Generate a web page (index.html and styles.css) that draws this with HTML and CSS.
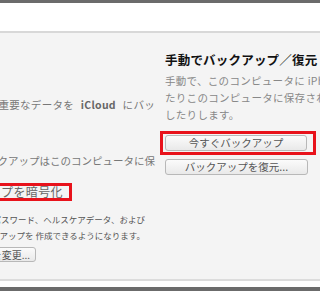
FILE: index.html
```html
<!DOCTYPE html>
<html lang="ja">
<head>
    <meta charset="UTF-8">
    <meta name="viewport" content="width=device-width, initial-scale=1.0">
    <title>バックアップ</title>
    <link rel="stylesheet" href="styles.css">
</head>
<body>

<div class="topbar"></div>
<div class="header"></div>

<div class="panel">
    <div class="col-left">
        <div class="row row-a"><span>iPhone 内の最も重要なデータを <b>iCloud</b> にバッ</span></div>
        <div class="row row-b"><span>iPhone の完全なバックアップはこのコンピュータに保</span></div>
        <div class="row row-c"><span class="mark-left">iPhone のバックアップを暗号化</span></div>
        <div class="row row-d"><span>これにより、アカウントパスワード、ヘルスケアデータ、および</span></div>
        <div class="row row-e"><span>HomeKit データのバックアップを 作成できるようになります。</span></div>
        <div class="row row-f"><span class="btn btn-left">パスワードを変更...</span></div>
    </div>

    <div class="col-right">
        <h3>手動でバックアップ／復元</h3>
        <p class="desc">手動で、このコンピュータに iPhone をバックアップし</p>
        <p class="desc">たりこのコンピュータに保存されたバックアップを復元</p>
        <p class="desc">したりします。</p>

        <div class="mark">
            <button type="button" class="btn">今すぐバックアップ</button>
        </div>
        <button type="button" class="btn btn-restore">バックアップを復元...</button>
    </div>
</div>

<div class="footer"></div>
<div class="bottombar"></div>

</body>
</html>
```

FILE: styles.css
```css
body {
    font-family: "Noto Sans CJK JP", "Noto Sans", sans-serif;
    margin: 0;
    width: 320px;
    height: 291px;
    overflow: hidden;
    background-color: #fff;
}

.topbar {
    height: 3px;
    background-color: #6b6b6b;
}

.header {
    height: 28px;
    background-color: #fff;
    border-bottom: 2px solid #d8d8d8;
}

.panel {
    height: 246px;
    background-color: #f4f4f4;
    display: flex;
}

.col-left {
    width: 160px;
    flex: none;
}

.row {
    display: flex;
    justify-content: flex-end;
    white-space: nowrap;
    color: #777;
}

.row-a,
.row-b {
    width: 155px;
    height: 14px;
    font-size: 10.5px;
    line-height: 14px;
}

.row-a {
    margin-top: 65px;
    letter-spacing: 0.3px;
    word-spacing: 4px;
}

.row-a b {
    color: #666;
}

.row-b {
    margin-top: 42px;
}

.row-c {
    width: 72px;
    margin-top: 15px;
}

.mark-left {
    border: 3px solid #e8121b;
    border-left: none;
    height: 12px;
    padding-right: 6px;
    font-size: 12px;
    line-height: 12px;
    letter-spacing: 0.4px;
    color: #666;
}

.row-d,
.row-e {
    width: 145px;
    height: 16px;
    font-size: 8.5px;
    line-height: 16px;
    color: #555;
}

.row-d {
    margin-top: 10px;
}

.row-f {
    width: 36px;
    margin-top: 4px;
}

.col-right {
    flex: 1;
    padding-left: 5px;
    overflow: hidden;
}

h3 {
    margin: 19px 0 4px;
    font-size: 12.5px;
    line-height: 16px;
    letter-spacing: 0.2px;
    color: #111;
    white-space: nowrap;
}

.desc {
    margin: 0;
    font-size: 10.5px;
    line-height: 17px;
    letter-spacing: 0.3px;
    color: #888;
    white-space: nowrap;
}

.btn {
    display: block;
    box-sizing: border-box;
    width: 142px;
    height: 16px;
    padding: 0;
    border: 1px solid #b8b8b8;
    border-radius: 3px;
    background: linear-gradient(#fbfbfb, #e9e9e9);
    font-family: inherit;
    font-size: 10.5px;
    line-height: 14px;
    color: #555;
    text-align: center;
}

.btn-left {
    width: auto;
    height: 15px;
    padding: 0 5px 0 40px;
    font-size: 10px;
    line-height: 13px;
}

.mark {
    width: 146px;
    margin: 8px 0 0 -5px;
    padding: 1px 2px;
    border: 3px solid #e8121b;
}

.btn-restore {
    width: 143px;
    margin-top: 4px;
}

.footer {
    height: 6px;
    background-color: #fff;
    border-top: 2px solid #dcdcdc;
}

.bottombar {
    height: 4px;
    background-color: #6b6b6b;
}
```
